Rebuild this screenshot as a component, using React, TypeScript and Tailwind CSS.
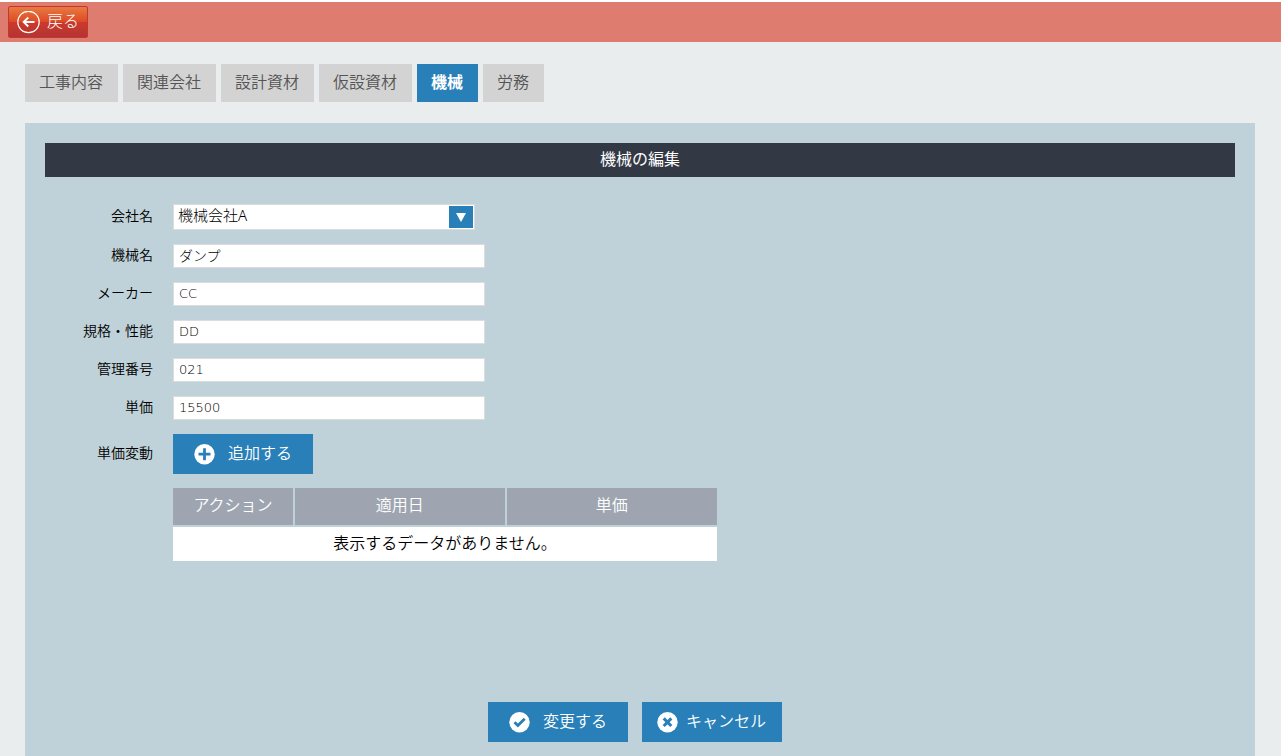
import React from 'react';

interface Field {
  id: string;
  label: string;
  value: string;
  latin?: boolean;
}

const tabs = ['工事内容', '関連会社', '設計資材', '仮設資材', '機械', '労務'];

const fields: Field[] = [
  { id: 'machine', label: '機械名', value: 'ダンプ' },
  { id: 'maker', label: 'メーカー', value: 'CC', latin: true },
  { id: 'spec', label: '規格・性能', value: 'DD', latin: true },
  { id: 'number', label: '管理番号', value: '021', latin: true },
  { id: 'price', label: '単価', value: '15500', latin: true },
];

const rowClass = 'grid grid-cols-[108px_minmax(0,1fr)] items-center gap-x-5';
const labelClass = 'pb-0.5 text-right text-sm leading-5 font-[350] text-black';
const headCellClass = 'bg-[#9ea5b1] p-0 pb-1 font-[350]';

// 白い丸の中に記号を描くアイコン
const CircleIcon: React.FC<{ d: string; strokeWidth: number }> = ({ d, strokeWidth }) => (
  <svg width="21" height="21" viewBox="0 0 21 21" fill="none" aria-hidden="true">
    <circle cx="10.5" cy="10.2" r="10.2" fill="#fff" />
    <path d={d} stroke="#2980b9" strokeWidth={strokeWidth} />
  </svg>
);

interface ActionButtonProps {
  icon: React.ReactNode;
  label: string;
  wide?: boolean;
}

const ActionButton: React.FC<ActionButtonProps> = ({ icon, label, wide = false }) => (
  <button
    type="button"
    className={`flex h-10 w-[140px] items-center bg-[#2980b9] text-base text-white hover:bg-[#2471a3] ${
      wide ? 'gap-2 pl-[15px]' : 'gap-[13px] pl-[21px]'
    }`}
  >
    {icon}
    <span className="pb-0.5 leading-6 font-[350]">{label}</span>
  </button>
);

const Header: React.FC = () => (
  <header className="mt-0.5 flex h-10 items-center bg-[#de7c70] pl-2">
    <button
      type="button"
      className="flex h-8 w-20 items-center gap-[7px] rounded-xs border border-[#c0392b] bg-[linear-gradient(to_bottom,#e87a42_0%,#de4a26_49%,#cb3a2b_51%,#b53434_100%)] pl-2 text-base text-white"
    >
      <svg width="23" height="23" viewBox="0 0 23 23" fill="none" stroke="#fff" aria-hidden="true">
        <circle cx="11.5" cy="11" r="10.7" strokeWidth="1.2" />
        <path d="M17.5 11H7M11.3 6.5L6.6 11l4.7 4.5" strokeWidth="1.8" />
      </svg>
      <span className="pb-0.5 leading-6 font-light">戻る</span>
    </button>
  </header>
);

const Tabs: React.FC = () => (
  <nav className="flex flex-wrap gap-[5px]">
    {tabs.map((tab) => (
      <a
        key={tab}
        href="#"
        className={`flex h-[38px] items-center pr-[15px] pb-0.5 pl-3.5 text-base leading-6 ${
          tab === '機械' ? 'bg-[#2980b9] font-bold text-white' : 'bg-[#d3d3d3] font-[350] text-[#555]'
        }`}
      >
        {tab}
      </a>
    ))}
  </nav>
);

const PriceTable: React.FC = () => (
  <table className="w-[544px] table-fixed border-collapse text-base leading-6">
    <thead>
      <tr className="h-[38px] text-white">
        <th className={`w-[121px] border-r-2 border-[#c0d2d9] ${headCellClass}`}>アクション</th>
        <th className={`border-r-2 border-[#c0d2d9] ${headCellClass}`}>適用日</th>
        <th className={headCellClass}>単価</th>
      </tr>
    </thead>
    <tbody>
      <tr className="h-[35px]">
        <td
          colSpan={3}
          className="border-t-2 border-[#c0d2d9] bg-white p-0 pb-0.5 text-center font-[350] text-black"
        >
          表示するデータがありません。
        </td>
      </tr>
    </tbody>
  </table>
);

export default function App() {
  return (
    <div className="flex min-h-screen flex-col bg-white font-['Noto_Sans','Noto_Sans_CJK_JP',sans-serif]">
      <Header />
      <main className="flex flex-1 flex-col bg-[#e9edee] pt-[22px] pr-[26px] pl-[25px]">
        <Tabs />

        <form className="mt-[21px] flex flex-1 flex-col bg-[#c0d2d9] px-5 pt-5 pb-3.5">
          <h1 className="h-[34px] bg-[#323844] pt-1 text-center text-base leading-6 text-white">機械の編集</h1>

          <div className="mt-[27px] flex flex-col gap-3.5">
            <div className={rowClass}>
              <label htmlFor="company" className={labelClass}>
                会社名
              </label>
              <div className="relative w-[302px]">
                <select
                  id="company"
                  className="block h-[26px] w-full appearance-none border border-[#dcdcdc] bg-white pb-1 pl-1 text-[15px] leading-5 font-light text-black"
                >
                  <option>機械会社A</option>
                </select>
                {/* 選択ボックスの矢印 */}
                <span className="pointer-events-none absolute top-0.5 right-0.5 flex h-[22px] w-6 items-center justify-center bg-[#2980b9]">
                  <svg width="10" height="9" viewBox="0 0 10 9" fill="#fff" aria-hidden="true">
                    <path d="M0 0h10L5 9z" />
                  </svg>
                </span>
              </div>
            </div>

            {fields.map((field) => (
              <div key={field.id} className={rowClass}>
                <label htmlFor={field.id} className={labelClass}>
                  {field.label}
                </label>
                <input
                  id={field.id}
                  type="text"
                  defaultValue={field.value}
                  className={`h-6 w-[312px] border border-[#dcdcdc] bg-white pb-0.5 pl-[5px] leading-5 text-black ${
                    field.latin
                      ? "font-['DejaVu_Sans',sans-serif] text-[13px] font-extralight"
                      : 'text-sm font-light'
                  }`}
                />
              </div>
            ))}

            <div className={rowClass}>
              <span className={labelClass}>単価変動</span>
              <ActionButton icon={<CircleIcon d="M10.5 4.2v12M4.5 10.2h12" strokeWidth={2.8} />} label="追加する" />
            </div>

            <div className="pl-32">
              <PriceTable />
            </div>
          </div>

          <div className="mt-auto flex justify-center gap-3.5 pr-2.5">
            <ActionButton icon={<CircleIcon d="M5.5 10.2l3.4 3.4 6.8-6.8" strokeWidth={2.8} />} label="変更する" />
            <ActionButton
              icon={<CircleIcon d="M6.7 6.4l7.6 7.6M14.3 6.4l-7.6 7.6" strokeWidth={3} />}
              label="キャンセル"
              wide
            />
          </div>
        </form>
      </main>
    </div>
  );
}
